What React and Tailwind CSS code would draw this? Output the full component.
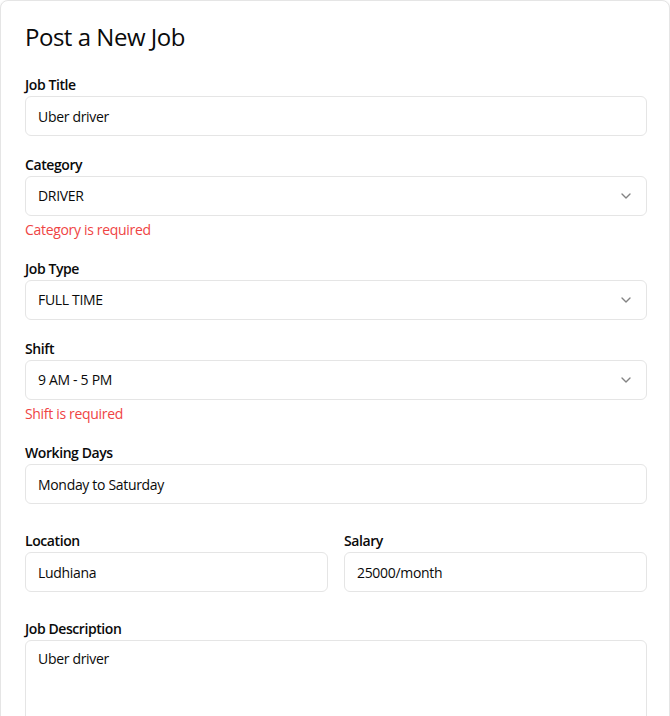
import { ChevronDown } from "lucide-react";

const Label = ({ children }) => (
	<label className="block pt-px mb-px text-sm font-semibold leading-5 tracking-[-0.03em] text-[#0a0a0a]">
		{children}
	</label>
);

const TextInput = ({ value }) => (
	<input
		type="text"
		defaultValue={value}
		className="h-10 w-full rounded-md border border-[#e5e5e5] bg-white px-3 text-sm text-[#0a0a0a] outline-none"
	/>
);

const SelectBox = ({ value }) => (
	<button
		type="button"
		className="flex h-10 w-full items-center justify-between rounded-md border border-[#e5e5e5] bg-white px-3 text-sm text-[#0a0a0a]"
	>
		<span>{value}</span>
		<ChevronDown className="h-4 w-4 opacity-50" />
	</button>
);

const Error = ({ children }) => (
	<p className="mt-1 text-sm leading-5 text-[#ef4444]">{children}</p>
);

export default function App() {
	return (
		<div
			className="min-h-screen bg-white tracking-[-0.02em]"
			style={{ fontFamily: '"Open Sans", "Noto Sans", sans-serif' }}
		>
			<div className="rounded-lg border border-[#e5e5e5] bg-white py-6 pl-6 pr-[22px] shadow-sm">
				<h2 className="mb-[25px] text-2xl font-medium leading-none tracking-[-0.02em] text-[#0a0a0a]">
					Post a New Job
				</h2>
				<form className="flex flex-col gap-[18px]">
					<div>
						<Label>Job Title</Label>
						<TextInput value="Uber driver" />
					</div>
					<div>
						<Label>Category</Label>
						<SelectBox value="DRIVER" />
						<Error>Category is required</Error>
					</div>
					<div>
						<Label>Job Type</Label>
						<SelectBox value="FULL TIME" />
					</div>
					<div>
						<Label>Shift</Label>
						<SelectBox value="9 AM - 5 PM" />
						<Error>Shift is required</Error>
					</div>
					<div>
						<Label>Working Days</Label>
						<TextInput value="Monday to Saturday" />
					</div>
					<div className="my-2 grid grid-cols-2 gap-4">
						<div>
							<Label>Location</Label>
							<TextInput value="Ludhiana" />
						</div>
						<div>
							<Label>Salary</Label>
							<TextInput value="25000/month" />
						</div>
					</div>
					<div>
						<Label>Job Description</Label>
						<textarea
							defaultValue="Uber driver"
							className="min-h-[120px] w-full resize-none rounded-md border border-[#e5e5e5] bg-white px-3 py-2 text-sm leading-5 text-[#0a0a0a] outline-none"
						/>
					</div>
				</form>
			</div>
		</div>
	);
}
